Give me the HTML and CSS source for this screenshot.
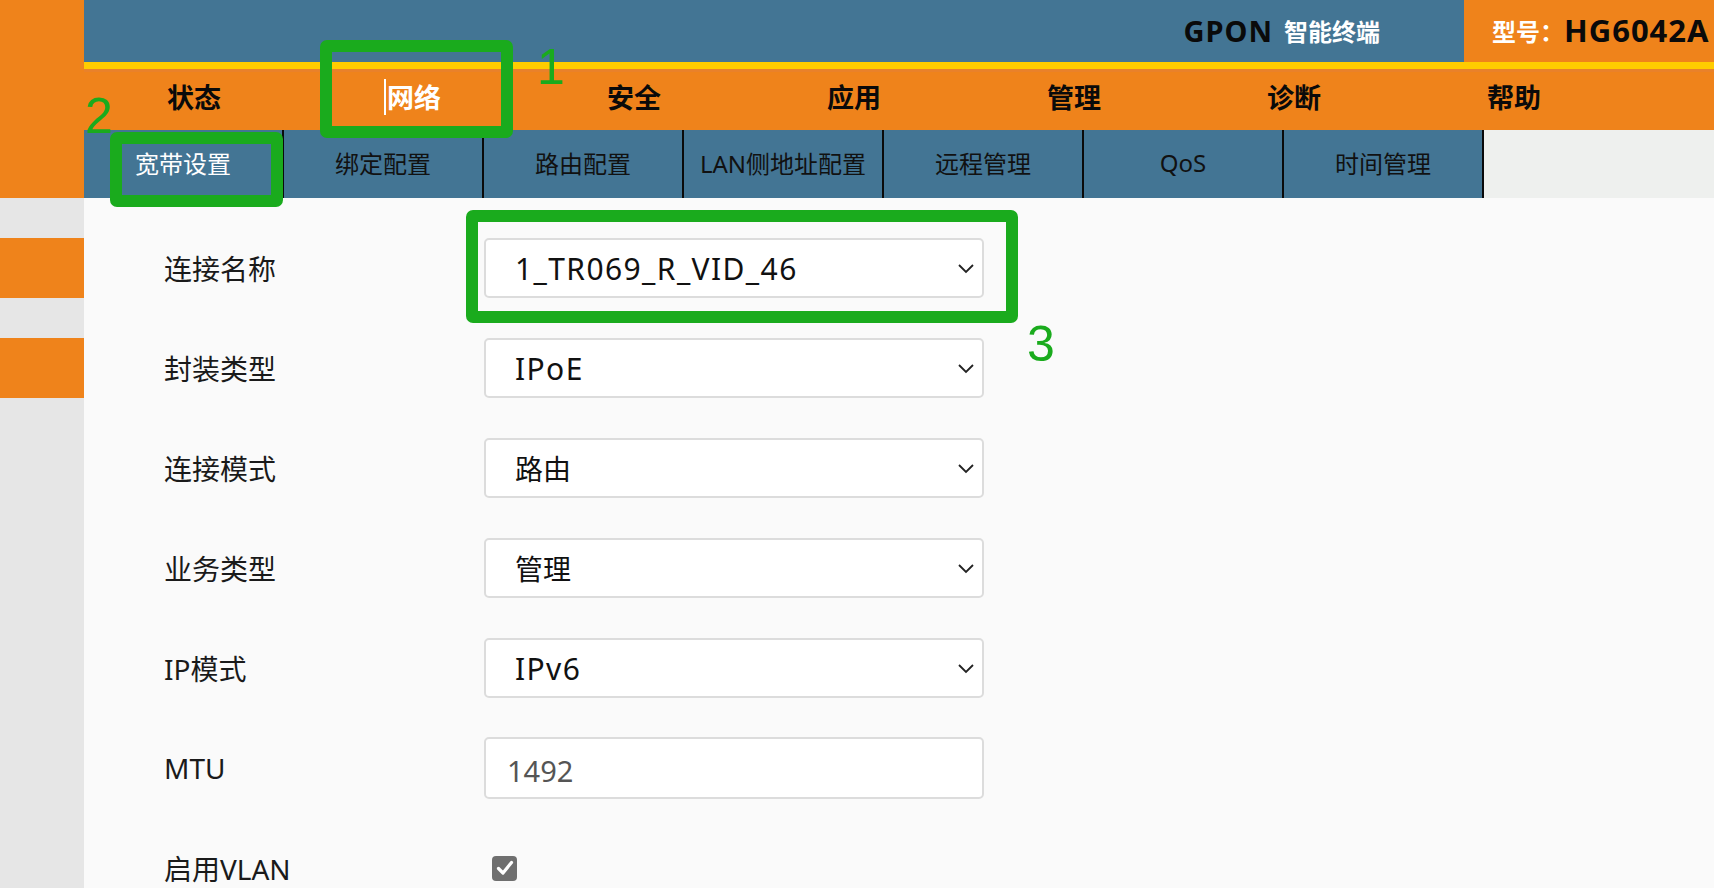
FILE: index.html
```html
<!DOCTYPE html>
<html lang="zh-CN">
<head>
<meta charset="utf-8">
<title>GPON 智能终端</title>
<link rel="stylesheet" href="styles.css">
</head>
<body>
<div class="page">
  <aside class="sidebar">
    <div class="sb-top"></div>
    <div class="sb-item"></div>
    <div class="sb-item"></div>
  </aside>
  <div class="main">
    <header class="topbar">
      <div class="brand"><span class="brand-en">GPON</span><span class="brand-cn">智能终端</span></div>
      <div class="model"><span class="model-cn">型号：</span><span class="model-en">HG6042A</span></div>
    </header>
    <div class="yellow"></div>
    <nav class="nav">
      <div class="nav-item">状态</div>
      <div class="nav-item active"><span class="caret"></span>网络</div>
      <div class="nav-item">安全</div>
      <div class="nav-item">应用</div>
      <div class="nav-item">管理</div>
      <div class="nav-item">诊断</div>
      <div class="nav-item">帮助</div>
    </nav>
    <div class="subnav">
      <div class="tab active">宽带设置</div>
      <div class="tab">绑定配置</div>
      <div class="tab">路由配置</div>
      <div class="tab">LAN侧地址配置</div>
      <div class="tab">远程管理</div>
      <div class="tab">QoS</div>
      <div class="tab">时间管理</div>
    </div>
    <main class="content">
      <div class="row">
        <div class="label">连接名称</div>
        <div class="select"><span class="val">1_TR069_R_VID_46</span><svg class="chev" width="18" height="11" viewBox="0 0 18 11"><path d="M2 2 L9 9 L16 2" fill="none" stroke="#222" stroke-width="1.8"/></svg></div>
      </div>
      <div class="row">
        <div class="label">封装类型</div>
        <div class="select"><span class="val">IPoE</span><svg class="chev" width="18" height="11" viewBox="0 0 18 11"><path d="M2 2 L9 9 L16 2" fill="none" stroke="#222" stroke-width="1.8"/></svg></div>
      </div>
      <div class="row">
        <div class="label">连接模式</div>
        <div class="select"><span class="val cn">路由</span><svg class="chev" width="18" height="11" viewBox="0 0 18 11"><path d="M2 2 L9 9 L16 2" fill="none" stroke="#222" stroke-width="1.8"/></svg></div>
      </div>
      <div class="row">
        <div class="label">业务类型</div>
        <div class="select"><span class="val cn">管理</span><svg class="chev" width="18" height="11" viewBox="0 0 18 11"><path d="M2 2 L9 9 L16 2" fill="none" stroke="#222" stroke-width="1.8"/></svg></div>
      </div>
      <div class="row">
        <div class="label">IP模式</div>
        <div class="select"><span class="val">IPv6</span><svg class="chev" width="18" height="11" viewBox="0 0 18 11"><path d="M2 2 L9 9 L16 2" fill="none" stroke="#222" stroke-width="1.8"/></svg></div>
      </div>
      <div class="row">
        <div class="label">MTU</div>
        <div class="input">1492</div>
      </div>
      <div class="row">
        <div class="label">启用VLAN</div>
        <div class="checkbox"><svg width="18" height="16" viewBox="0 0 18 16"><path d="M2.5 8.5 L7 13 L15.5 2.5" fill="none" stroke="#fff" stroke-width="3.2" stroke-linecap="round" stroke-linejoin="round"/></svg></div>
      </div>
    </main>
  </div>
</div>

<div class="mark mark1"></div>
<div class="mark mark2"></div>
<div class="mark mark3"></div>
<div class="num num1">1</div>
<div class="num num2">2</div>
<div class="num num3">3</div>
</body>
</html>
```

FILE: styles.css
```css
* { box-sizing: border-box; }
html, body {
  margin: 0;
  padding: 0;
  width: 1714px;
  height: 888px;
  overflow: hidden;
  background: #fafafa;
  font-family: "Noto Sans", "Noto Sans CJK SC", sans-serif;
  color: #1a1a1a;
}
.page {
  display: flex;
  height: 888px;
}
.sidebar {
  width: 84px;
  flex: none;
  background: #e6e6e6;
  display: flex;
  flex-direction: column;
  gap: 40px;
}
.sb-top {
  flex: none;
  height: 198px;
  background: #ef831b;
}
.sb-item {
  flex: none;
  height: 60px;
  background: #ef831b;
}
.main {
  flex: 1;
  display: flex;
  flex-direction: column;
  min-width: 0;
}
.main > * { flex: none; }
.topbar {
  height: 62px;
  display: flex;
}
.brand {
  flex: 1;
  background: #437594;
  display: flex;
  align-items: center;
  justify-content: flex-end;
  padding-right: 84px;
  padding-bottom: 2px;
  font-weight: 700;
}
.brand-en {
  font-size: 29px;
  letter-spacing: 1px;
  color: #0a0a0a;
  margin-right: 11px;
}
.brand-cn {
  font-size: 24px;
  color: #fff;
}
.model {
  width: 250px;
  background: #ef831b;
  display: flex;
  align-items: center;
  padding-left: 28px;
  padding-bottom: 2px;
  font-weight: 700;
  white-space: nowrap;
}
.model-cn {
  font-size: 24px;
  color: #fff;
}
.model-en {
  font-size: 31px;
  letter-spacing: 1px;
  color: #0a0a0a;
}
.yellow {
  height: 7px;
  background: #ffcc00;
}
.nav {
  height: 61px;
  background: linear-gradient(#e9812a 0, #e9812a 3px, #ef831b 3px);
  display: flex;
}
.nav-item {
  width: 220px;
  display: flex;
  align-items: center;
  justify-content: center;
  font-size: 27px;
  font-weight: 700;
  color: #0a0a0a;
  padding-bottom: 6px;
}
.nav-item.active { color: #fff; }
.caret {
  display: inline-block;
  width: 2px;
  height: 36px;
  background: #fff;
  margin-right: 1px;
  margin-left: -3px;
}
.subnav {
  height: 68px;
  background: #eef0ee;
  display: flex;
}
.tab {
  width: 200px;
  background: #437594;
  border-right: 2px solid #0a0a0a;
  display: flex;
  align-items: center;
  justify-content: center;
  font-size: 24px;
  color: #111;
  white-space: nowrap;
  padding-bottom: 3px;
}
.tab.active { color: #fff; }
.content {
  padding: 40px 0 0 80px;
  display: flex;
  flex-direction: column;
  gap: 40px;
}
.row {
  flex: none;
  display: flex;
  align-items: center;
  height: 60px;
}
.label {
  width: 320px;
  font-size: 28px;
  color: #1a1a1a;
}
.select {
  width: 500px;
  height: 60px;
  background: #fff;
  border: 2px solid #dcdcdc;
  border-radius: 5px;
  display: flex;
  align-items: center;
  justify-content: space-between;
  padding: 0 7px 0 29px;
}
.val {
  font-size: 30px;
  letter-spacing: 1.4px;
  color: #111;
}
.val.cn {
  font-size: 28px;
  letter-spacing: 0;
}
.chev { flex: none; }
.input {
  width: 500px;
  height: 62px;
  background: #fff;
  border: 2px solid #dcdcdc;
  border-radius: 5px;
  display: flex;
  align-items: center;
  padding: 4px 0 0 21px;
  font-size: 29px;
  color: #555;
}
.checkbox {
  width: 25px;
  height: 25px;
  margin-left: 8px;
  background: #6f6f6f;
  border-radius: 4px;
  display: flex;
  align-items: center;
  justify-content: center;
}
.mark {
  position: absolute;
  border: 12px solid #1aab1d;
  border-radius: 7px;
}
.mark1 { left: 320px; top: 40px; width: 193px; height: 98px; }
.mark2 { left: 110px; top: 132px; width: 173px; height: 75px; }
.mark3 { left: 466px; top: 210px; width: 552px; height: 113px; }
.num {
  position: absolute;
  font-family: "Liberation Sans", sans-serif;
  font-size: 50px;
  line-height: 1;
  color: #1aab1d;
}
.num1 { left: 537px; top: 42px; }
.num2 { left: 85px; top: 91px; }
.num3 { left: 1027px; top: 319px; }
```
